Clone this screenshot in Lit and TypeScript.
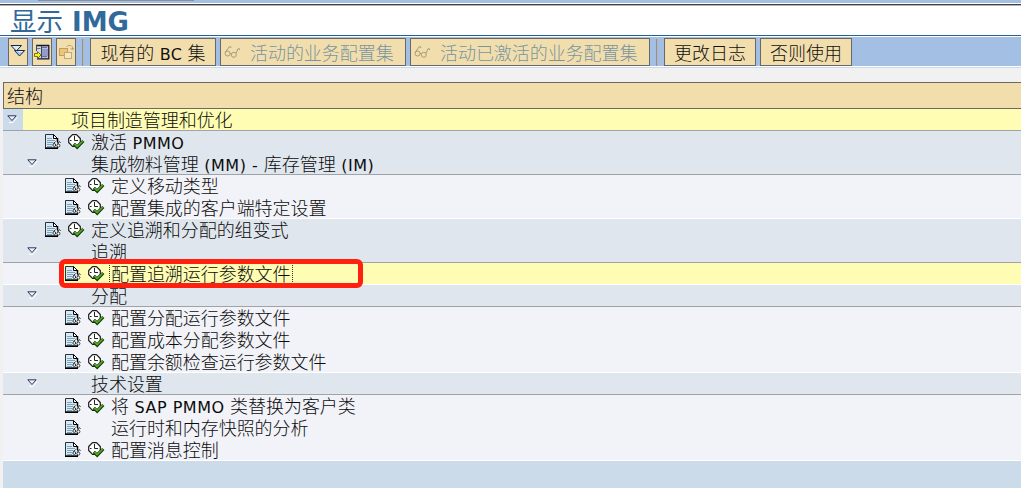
import { css, html, LitElement, nothing, svg } from "lit";
import { customElement, property } from "lit/decorators.js";

type Row = {
  level: number;
  text: string;
  kind: "root" | "folder" | "leaf";
  band?: boolean;
  line?: "gray" | "white";
  noRun?: boolean;
  selected?: boolean;
};

const ROWS: Row[] = [
  { level: 0, text: "项目制造管理和优化", kind: "root", line: "gray" },
  { level: 1, text: "激活 PMMO", kind: "leaf", band: true },
  { level: 1, text: "集成物料管理 (MM) - 库存管理 (IM)", kind: "folder", band: true, line: "gray" },
  { level: 2, text: "定义移动类型", kind: "leaf" },
  { level: 2, text: "配置集成的客户端特定设置", kind: "leaf", line: "white" },
  { level: 1, text: "定义追溯和分配的组变式", kind: "leaf", band: true },
  { level: 1, text: "追溯", kind: "folder", band: true, line: "gray" },
  { level: 2, text: "配置追溯运行参数文件", kind: "leaf", line: "white", selected: true },
  { level: 1, text: "分配", kind: "folder", band: true, line: "gray" },
  { level: 2, text: "配置分配运行参数文件", kind: "leaf" },
  { level: 2, text: "配置成本分配参数文件", kind: "leaf" },
  { level: 2, text: "配置余额检查运行参数文件", kind: "leaf", line: "white" },
  { level: 1, text: "技术设置", kind: "folder", band: true, line: "gray" },
  { level: 2, text: "将 SAP PMMO 类替换为客户类", kind: "leaf" },
  { level: 2, text: "运行时和内存快照的分析", kind: "leaf", noRun: true },
  { level: 2, text: "配置消息控制", kind: "leaf", line: "white" },
];

const icon = (w: number, h: number, body: unknown) =>
  html`<svg width="${w}" height="${h}" viewBox="0 0 ${w} ${h}" fill="none">${body}</svg>`;

const docIcon = icon(16, 16, svg`
  <path d="M.5 .5H8.5L12.5 4.5V14H.5Z" fill="#d6e9f5" stroke="#28323a"/>
  <path d="M8.5 .5V4.5H12.5Z" fill="#fff" stroke="#000"/>
  <path d="M2 4.5H7M2 6.5H10M2 8.5H9M2 10.5H7M2 12.5H7" stroke="#7fa3b8"/>
  <path d="M12.5 4V8M0 14.3H13" stroke="#000" stroke-width="1.5"/>
  <path d="M8 11L11 7.5M12.5 11L15 8" stroke="#eef4fa" stroke-width="2.4"/>
  <path d="M8.3 10L10.5 7.5M12.8 10L14.3 7.5L15.5 8.8" stroke="#222"/>
  <circle cx="9.3" cy="11" r="1.4" fill="#fff" stroke="#222" stroke-width=".9"/>
  <circle cx="13.4" cy="11.6" r="1.5" fill="#fff" stroke="#222" stroke-width=".9"/>
`);

const runIcon = icon(17, 16, svg`
  <path d="M4.5 .7H8.5L12.3 4.5V8.5L8.5 12.3H4.5L.7 8.5V4.5Z" fill="#fff" stroke="#1a1a1a" stroke-width="1.2" stroke-linejoin="round"/>
  <path d="M6.5 2V6.5H10M2 6.5H3.5M6.5 9.5V11" stroke="#222"/>
  <path d="M5.8 9.8L9.2 13.2L15.3 7" stroke="#153a0b" stroke-width="3.1"/>
  <path d="M6.3 9.8L9.2 12.5L14.8 7" stroke="#51ae22" stroke-width="1.7"/>
`);

const twistIcon = icon(11, 8, svg`
  <path d="M2 7.5L6 7.5L10.5 2" stroke="#fff"/>
  <path d="M.8 .8H9.2L5 5.5Z" fill="#eef1fb" stroke="#33365c"/>
`);

const expandIcon = icon(16, 16, svg`
  <path d="M4.5 6.5H14.7L9.5 12Z" fill="#a9c9ef" stroke="#17264d"/>
  <path d="M1 1.5H11.5L6.3 7Z" fill="#dceafa" stroke="#17264d"/>
  <path d="M8.5 7.5H12.5" stroke="#eef6ff"/>
`);

const positionIcon = icon(16, 16, svg`
  <rect x="2" y="1" width="13" height="14" fill="#b9bfe0"/>
  <rect x="2" y="1" width="5" height="14" fill="#c9e0de"/>
  <rect x="8" y="5" width="6" height="7" fill="#9599cb"/>
  <path d="M14.8 1V14.8H3M2 1.5H15" stroke="#171733" stroke-width="1.3"/>
  <path d="M7.5 2V14M2.5 1V7" stroke="#41465d"/>
  <path d="M3 4.5H6.5M8 3.5H13M8 12.5H13" stroke="#6a7090"/>
  <path d="M.5 9.5H3.5V7.5L7 11L3.5 14.5V12.5H.5Z" fill="#ffee1b" stroke="#5d5700" stroke-width=".8"/>
`);

const transferIcon = icon(16, 16, svg`
  <rect x="1.5" y="4.5" width="8" height="7" fill="#eac878" stroke="#c49d5c"/>
  <rect x="6.5" y="8.5" width="7" height="6" fill="#f6e6bd" stroke="#c3a873"/>
  <path d="M8.5 3L10 1.5H13L14.5 3V5.5M12.5 4L14.5 6L16 4" stroke="#b9a47c"/>
`);

const glassesIcon = icon(17, 14, svg`
  <g stroke="#a69b7c">
    <circle cx="3.6" cy="8.5" r="2.5"/>
    <circle cx="9.8" cy="9.8" r="2.5"/>
    <path d="M1.2 7.5L5 2L6.5 1.5L7 3M6 8.5L7.3 8.5M12 8.5L13.8 4L15.2 3.5L15.6 5"/>
  </g>
`);

// Latin runs use a wider face than the surrounding Chinese text
const mixed = (text: string) =>
  text
    .split(/([\x20-\x7e]+)/)
    .filter(Boolean)
    .map((t) => (/^[\x20-\x7e]/.test(t) ? html`<span class="latin">${t}</span>` : t));

@customElement("img-toolbar-button")
export class ImgToolbarButton extends LitElement {
  static override styles = css`
    :host {
      display: block;
      flex: none;
    }

    .button {
      box-sizing: border-box;
      display: flex;
      align-items: center;
      justify-content: center;
      width: 100%;
      height: 28px;
      padding: 0;
      border: 1px solid #68686a;
      border-radius: 0;
      background: #f2deac;
      color: #111;
      font: inherit;
      letter-spacing: inherit;
      white-space: pre;
    }

    .button.off {
      color: #7895a2;
    }

    .button.off.labelled {
      justify-content: flex-start;
      padding-left: 3px;
    }

    .glasses {
      display: flex;
      width: 26px;
    }

    .latin {
      font-family: "DejaVu Sans", sans-serif;
      font-weight: 400;
      font-size: 16px;
      letter-spacing: 0.3px;
    }
  `;

  @property()
  declare label: string;

  @property({ type: Boolean })
  declare off: boolean;

  constructor() {
    super();
    this.label = "";
    this.off = false;
  }

  override render() {
    return html`<button class="button ${this.off ? "off" : ""} ${this.label ? "labelled" : ""}">${this.off && this.label
      ? html`<span class="glasses">${glassesIcon}</span>`
      : nothing}${this.label ? html`<span>${mixed(this.label)}</span>` : html`<slot></slot>`}</button>`;
  }
}

@customElement("app-root")
export class AppRoot extends LitElement {
  static override styles = css`
    :host {
      display: flex;
      flex-direction: column;
      width: 1021px;
      height: 488px;
      overflow: hidden;
      background: #f1f1f1;
      color: #0c0c0c;
      font-family: "Liberation Sans", "Noto Sans CJK SC", sans-serif;
      font-size: 18px;
      font-weight: 300;
      letter-spacing: -0.05px;
    }

    svg {
      display: block;
      flex: none;
    }

    .strip {
      flex: none;
      box-sizing: border-box;
      height: 6px;
      padding-left: 38px;
      background: linear-gradient(#a3bfe3 3px, #fff 3px 4px, #404040 4px 5px, #b8b4b2 5px);
    }

    .tab {
      width: 156px;
      height: 1px;
      background: #8a9098;
    }

    .title {
      flex: none;
      box-sizing: border-box;
      height: 30px;
      margin: 0;
      padding-left: 10px;
      border-bottom: 1px solid #27608f;
      background: #fff;
      color: #31699b;
      font-size: 26.5px;
      font-weight: 400;
      line-height: 33px;
      white-space: pre;
    }

    .title .latin {
      font-size: 26px;
      font-weight: 700;
      letter-spacing: 0;
    }

    .toolbar {
      flex: none;
      box-sizing: border-box;
      display: flex;
      gap: 4px;
      height: 32px;
      padding: 1px 8px 0;
      border-top: 1px solid #fff;
      border-bottom: 1px solid #cbd9eb;
      background: linear-gradient(#a3bfe3 29px, #fff 29px);
    }

    .tool {
      width: 20px;
    }

    .sets {
      width: 126px;
    }

    .active {
      width: 186px;
    }

    .activated {
      width: 240px;
    }

    .wide {
      width: 92px;
    }

    .separator {
      flex: none;
      width: 2px;
      height: 27px;
      margin: 1px 2px 0;
      background: linear-gradient(90deg, #8f929a 1px, #b9b5b0 1px);
    }

    .tree {
      flex: 1;
      margin: 14px 0 0 3px;
      background: #ccdbe9;
    }

    .head {
      box-sizing: border-box;
      height: 27px;
      padding-left: 3px;
      border: 1px solid #6b6961;
      border-right: 0;
      background: #f2deac;
      line-height: 28px;
    }

    .row {
      box-sizing: border-box;
      display: flex;
      height: 22px;
      background: #f2f3f8;
    }

    .band {
      background: #e0e6ed;
    }

    .root {
      background: #ccdbe9;
    }

    .gray {
      border-bottom: 1px solid #a0a2a5;
    }

    .white {
      border-bottom: 1px solid #fff;
    }

    .twist {
      flex: none;
      box-sizing: border-box;
      width: 20px;
      padding: 6px 0 0 4px;
    }

    .content {
      flex: 1;
      display: flex;
    }

    .root .content,
    .selected .content {
      background: #fffdb3;
    }

    .icons {
      flex: none;
      box-sizing: border-box;
      display: flex;
      gap: 7px;
      width: 48px;
      padding: 3px 0 0 2px;
    }

    .text {
      height: 21px;
      line-height: 25px;
      white-space: pre;
    }

    .selected .text {
      margin-left: -2px;
      padding: 0 1px;
      border-left: 1px dotted #333;
      border-right: 1px dotted #333;
    }

    .latin {
      font-family: "DejaVu Sans", sans-serif;
      font-weight: 400;
      font-size: 16px;
      letter-spacing: 0.5px;
    }

    .marker {
      position: absolute;
      left: 59px;
      top: 259px;
      box-sizing: border-box;
      width: 304px;
      height: 29px;
      border: 5px solid #ff200f;
      border-radius: 6px;
    }

    .indent-1 {
      padding-left: 20px;
    }

    .indent-2 {
      padding-left: 40px;
    }
  `;

  private _row(r: Row) {
    const classes = [
      "row",
      r.kind,
      `indent-${r.level}`,
      r.band ? "band" : "",
      r.line ?? "",
      r.selected ? "selected" : "",
    ].join(" ");
    return html`
      <div class="${classes}">
        <div class="twist">${r.kind === "leaf" ? nothing : twistIcon}</div>
        <div class="content">
          <div class="icons">
            ${r.kind === "leaf" ? docIcon : nothing}
            ${r.kind === "leaf" && !r.noRun ? runIcon : nothing}
          </div>
          <div class="text">${mixed(r.text)}</div>
        </div>
      </div>
    `;
  }

  override render() {
    return html`
      <div class="strip"><div class="tab"></div></div>
      <h1 class="title">${mixed("显示 IMG")}</h1>
      <div class="toolbar">
        <img-toolbar-button class="tool">${expandIcon}</img-toolbar-button>
        <img-toolbar-button class="tool">${positionIcon}</img-toolbar-button>
        <img-toolbar-button class="tool" off>${transferIcon}</img-toolbar-button>
        <div class="separator"></div>
        <img-toolbar-button class="sets" label="现有的 BC 集"></img-toolbar-button>
        <img-toolbar-button class="active" label="活动的业务配置集" off></img-toolbar-button>
        <img-toolbar-button class="activated" label="活动已激活的业务配置集" off></img-toolbar-button>
        <div class="separator"></div>
        <img-toolbar-button class="wide" label="更改日志"></img-toolbar-button>
        <img-toolbar-button class="wide" label="否则使用"></img-toolbar-button>
      </div>
      <div class="tree">
        <div class="head">结构</div>
        ${ROWS.map((r) => this._row(r))}
      </div>
      <div class="marker"></div>
    `;
  }
}

declare global {
  interface HTMLElementTagNameMap {
    "img-toolbar-button": ImgToolbarButton;
    "app-root": AppRoot;
  }
}
